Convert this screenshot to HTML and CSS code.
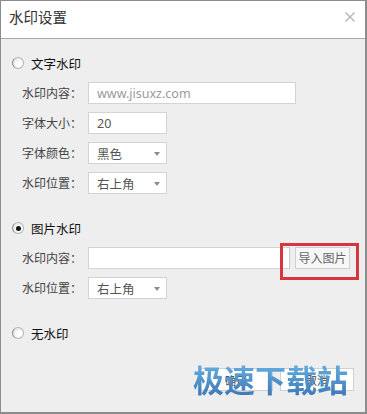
FILE: index.html
```html
<!DOCTYPE html>
<html lang="zh-CN">

<head>
    <meta charset="UTF-8">
    <meta name="viewport" content="width=device-width, initial-scale=1.0">
    <title>水印设置</title>
    <link rel="stylesheet" href="styles.css">
</head>

<body>
    <div class="dialog">
        <div class="title-bar">
            <span class="title">水印设置</span>
            <svg class="close" width="10" height="10" viewBox="0 0 10 10">
                <path d="M0.5 0.5 L9.5 9.5 M9.5 0.5 L0.5 9.5" stroke="#b4b4b4" stroke-width="1.3" fill="none" />
            </svg>
        </div>

        <div class="content">
            <div class="radio-row">
                <span class="radio"></span>
                <span class="radio-text">文字水印</span>
            </div>
            <div class="fields">
                <div class="field">
                    <span class="label">水印内容：</span>
                    <div class="input wide placeholder">www.jisuxz.com</div>
                </div>
                <div class="field">
                    <span class="label">字体大小：</span>
                    <div class="input small">20</div>
                </div>
                <div class="field">
                    <span class="label">字体颜色：</span>
                    <div class="input small select">黑色<span class="arrow"></span></div>
                </div>
                <div class="field">
                    <span class="label">水印位置：</span>
                    <div class="input small select">右上角<span class="arrow"></span></div>
                </div>
            </div>

            <div class="radio-row gap-top">
                <span class="radio checked"></span>
                <span class="radio-text">图片水印</span>
            </div>
            <div class="fields">
                <div class="field">
                    <span class="label">水印内容：</span>
                    <div class="input file"></div>
                    <div class="import-wrap">
                        <span class="import-btn">导入图片</span>
                    </div>
                </div>
                <div class="field">
                    <span class="label">水印位置：</span>
                    <div class="input small select">右上角<span class="arrow"></span></div>
                </div>
            </div>

            <div class="radio-row gap-top">
                <span class="radio"></span>
                <span class="radio-text">无水印</span>
            </div>

            <div class="footer">
                <span class="btn">确定</span>
                <span class="btn">取消</span>
            </div>
        </div>

        <div class="site-mark">极速下载站</div>
    </div>
</body>

</html>
```

FILE: styles.css
```css
* {
    margin: 0;
    padding: 0;
    box-sizing: border-box;
}

body {
    width: 367px;
    height: 414px;
    font-family: "Noto Sans", "Noto Sans CJK SC", sans-serif;
    font-size: 12px;
    color: #333;
    overflow: hidden;
}

.dialog {
    position: relative;
    width: 367px;
    height: 414px;
    border: 1px solid #8c8c8c;
    border-right-width: 2px;
    border-bottom-width: 2px;
    background: #eeeeee;
}

.title-bar {
    height: 38px;
    background: #fff;
    border-bottom: 1px solid #a8a8a8;
    display: flex;
    align-items: center;
    justify-content: space-between;
    padding: 0 10px 0 8px;
}

.title {
    font-size: 14.5px;
    color: #333;
    line-height: 1;
    margin-top: -4px;
}

.close {
    margin-top: -5px;
}

.content {
    padding: 14px 11px 0 11px;
}

.radio-row {
    height: 20px;
    display: flex;
    align-items: center;
}

.gap-top {
    margin-top: 24px;
}

.radio {
    width: 12px;
    height: 12px;
    border-radius: 50%;
    border: 1px solid #b5b5b5;
    border-left-color: #8a8a8a;
    background: radial-gradient(circle at 65% 60%, #ffffff 30%, #e2e2e2 75%);
    margin-right: 7px;
    position: relative;
}

.radio.checked::after {
    content: "";
    position: absolute;
    left: 2.5px;
    top: 2.5px;
    width: 5px;
    height: 5px;
    border-radius: 50%;
    background: #111;
}

.radio-text {
    font-size: 12.5px;
    color: #111;
}

.fields {
    padding-left: 10px;
    margin-top: 9px;
    display: flex;
    flex-direction: column;
    gap: 8px;
}

.field {
    display: flex;
    align-items: center;
    height: 22px;
}

.label {
    width: 66px;
    color: #444;
    font-size: 12px;
}

.input {
    height: 22px;
    background: #fff;
    border: 1px solid #d3d3d3;
    padding-left: 8px;
    display: flex;
    align-items: center;
    color: #555;
    font-size: 12.5px;
    position: relative;
}

.wide {
    width: 208px;
}

.small {
    width: 79px;
}

.placeholder {
    color: #9a9a9a;
}

.file {
    width: 202px;
    border-right-color: #c8c8c8;
}

.arrow {
    position: absolute;
    right: 6px;
    top: 9px;
    border-left: 3px solid transparent;
    border-right: 3px solid transparent;
    border-top: 4px solid #8c8c8c;
}

.import-wrap {
    position: relative;
    margin-left: 5px;
}

.import-wrap::after {
    content: "";
    position: absolute;
    left: -15px;
    top: -4px;
    width: 73px;
    height: 31px;
    border: 3px solid #d6363f;
}

.import-btn {
    display: flex;
    align-items: center;
    justify-content: center;
    width: 55px;
    height: 22px;
    background: #f7f7f7;
    border: 1px solid #cfcfcf;
    color: #666;
    font-size: 12px;
}

.footer {
    display: flex;
    justify-content: flex-end;
    gap: 7px;
    margin-top: 25px;
}

.btn {
    width: 74px;
    height: 23px;
    background: #fff;
    border: 1px solid #d0d0d0;
    display: flex;
    align-items: center;
    justify-content: center;
    font-size: 11px;
    color: #444;
}

.site-mark {
    position: absolute;
    left: 192px;
    top: 358px;
    font-family: "Noto Sans CJK SC", sans-serif;
    font-size: 31px;
    font-weight: 700;
    line-height: 1.3;
    background: linear-gradient(#6cb6e6, #3b74b4);
    -webkit-background-clip: text;
    background-clip: text;
    color: transparent;
}
```
